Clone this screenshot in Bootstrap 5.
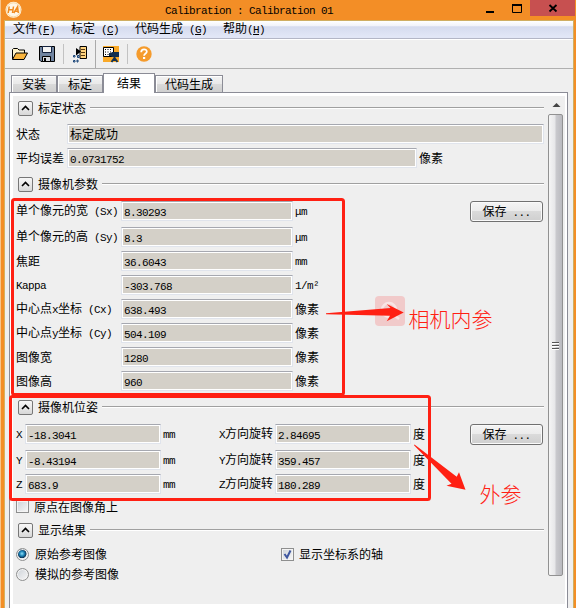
<!DOCTYPE html>
<html lang="zh-CN">
<head>
<meta charset="utf-8">
<meta name="viewport" content="width=device-width, initial-scale=1">
<title>Calibration : Calibration 01</title>
<link href="https://cdn.jsdelivr.net/npm/bootstrap@5.3.0/dist/css/bootstrap.min.css" rel="stylesheet">
<style>
body{width:576px;height:608px;margin:0;overflow:hidden;background:#f38e26;color:#000;font:12px/16px "Noto Sans CJK SC",sans-serif}
svg{display:block;flex:none}
i{font:11px/16px "Liberation Mono",monospace;letter-spacing:-.6px;white-space:pre}
.win{width:576px;height:608px;border-left:1px solid #f7c58c}
.titlebar{height:20px}
.titlebar .caption{padding-left:140px}
.winbtns{margin-right:1px}
.closebtn{width:45px;height:16px;background:#c75050}
.frame{margin:0 2px 0 3px;height:588px;background:#efefef;border:1px solid #cfae62;border-bottom:0;border-left-color:#d9b25c}
.menus{height:18px;padding:0 0 2px 8px;background:linear-gradient(#fff 0,#f1f3fa 28%,#d5dbee 34%,#e1e6f6 90%);border-bottom:1px solid #b3b6c6}
.menus span{white-space:nowrap}
.m1{width:58px}.m2{width:64px}.m3{width:88px}
.tools{height:30px;border-top:1px solid #fff;border-bottom:1px solid #b0b0b0}
.tabstrip{height:23px;padding:0 0 0 6px}
.tabitem{width:46px;height:17px;border:1px solid #8b8c96;border-bottom:0;background:linear-gradient(#f3f3f3,#e9e9e9 50%,#dadada 52%,#cfcfcf);line-height:16px;box-shadow:inset 1px 1px #fff;text-align:center;white-space:nowrap}
.tabitem.on{width:52px;height:20px;background:#fff;position:relative;z-index:1;margin-bottom:-1px;line-height:18px}
.tabitem.wide{width:68px}
.pane{margin-left:4px;width:559px;height:520px;background:#fff;border:1px solid #8b8c96;border-bottom:0;padding:3px 2px 0 3px}
.inner{height:508px;background:#efefef}
.content{width:535px;padding:0 1px 0 3px}
.ln{height:24px;display:flex;align-items:center;white-space:nowrap}
.sp1{margin-top:1px}.sp2{margin-top:2px}.sp3{margin-top:3px}
.opt{height:20px}.opt0{height:21px}
.opt .txt{margin-left:6px}
.opt .txt.first{width:246px}
.opt0 .txt,.opt .txt.near{margin-left:5px}
.rule{height:2px;border-top:1px solid #a0a0a0;background:#fff;flex:1;margin:0 3px 0 4px}
.fold{width:15px;height:15px;border:1px solid #777;border-radius:2px;background:linear-gradient(#f7f7f7,#e8e8e8 50%,#d7d7d7);margin:0 5px 0 2px}
.fld{height:20px;border:1px solid #e0e4ec;border-top-color:#a6a8b0;background:#d4d0c8;box-shadow:inset 0 0 0 1px #fff;padding:0 0 0 2px;line-height:17px;flex:none}
.fld i{line-height:17px}
.c0{width:51px}.w0{width:477px}.w01{width:350px}
.c1{width:105px}.w1{width:172px}
.c2{width:9px}.w2{width:136px}
.rot{width:56px}
.unit{margin-left:2px}
.unit.gap{width:56px}
.savebtn{width:73px;height:21px;border:1px solid #707070;border-radius:3px;background:linear-gradient(#f4f4f4,#ebebeb 48%,#dadada 50%,#cfcfcf);box-shadow:inset 0 0 0 1px #fafafa;font-size:12px;line-height:18px;padding:0;color:#000}
.bar{width:16px;height:480px}
.thumb{width:15px;height:462px;border:1px solid #919191;border-radius:2px;background:linear-gradient(90deg,#f5f5f5,#e7e7e9 45%,#c9c9cd 55%,#bababf)}
.notes{position:absolute;left:0;top:0;pointer-events:none}
.notes text{font:300 21px "Noto Sans CJK SC",sans-serif;fill:#ff2013}
.box,.dot{width:13px;height:13px;border:1px solid #8e8f8f;background:linear-gradient(135deg,#cdd2d8,#f8f8f8);box-shadow:inset 0 0 0 1px #f4f4f4;flex:none}
.dot{border-radius:50%}
.dot.sel{background:radial-gradient(circle at 45% 42%,#8fe0f8 0,#1980b4 28%,#103454 48%,#e8eef2 56%)}
</style>
<script src="https://cdn.jsdelivr.net/npm/bootstrap@5.3.0/dist/js/bootstrap.bundle.min.js"></script>
</head>
<body>
<div class="win">
 <header class="titlebar d-flex align-items-center">
  <svg width="20" height="20" viewBox="0 0 20 20" class="ms-1"><circle cx="8.5" cy="9.8" r="8" fill="#fff6e6"/><circle cx="8.5" cy="9.8" r="7" fill="none" stroke="#f9d9a5"/><path d="M4.2 6.5 3.2 13M8.5 6.5 7.5 13M4 9.7h4M8.800 13l3.800-6.200L13.300 13M10.200 11.200H13" fill="none" stroke="#f18b20" stroke-width="1.5"/></svg>
  <div class="caption"><i>Calibration : Calibration 01</i></div>
  <div class="winbtns d-flex align-self-start ms-auto">
   <svg width="44" height="16"><path d="M0 11h8v2H0z"/><path d="M26.500 5h9v7.500h-9z" fill="none" stroke="#000"/><path d="M26 5h10" stroke="#000" stroke-width="2"/></svg>
   <div class="closebtn"><svg width="45" height="16"><path d="m19.500 5 7 6.500m0-6.500-7 6.500" stroke="#000" stroke-width="1.800"/></svg></div>
  </div>
 </header>
 <div class="frame">
  <nav class="menus d-flex align-items-center">
   <span class="m1">文件<i>(<u>F</u>)</i></span><span class="m2">标定<i> (<u>C</u>)</i></span><span class="m3">代码生成<i> (<u>G</u>)</i></span><span>帮助<i>(<u>H</u>)</i></span>
  </nav>
  <div class="tools d-flex align-items-center">
   <svg width="162" height="28" viewBox="5 40 162 28">
    <path d="M12.500 59V49.500l1-1h4l1.500 1.500h5.500V53" fill="#fff3c9" stroke="#000"/><path d="M12.500 59.500 16 53h11.500L24 59.500z" fill="#f9b43d" stroke="#000"/>
    <path d="M39.500 46.500h15v15H41l-1.500-1.500z" fill="#7084a0" stroke="#000"/><path d="M42.500 46.500h9v6h-9z" fill="#f4f4f4" stroke="#152440"/><path d="M42.500 56.500h8v5h-8z" fill="#d8dbe0" stroke="#000"/><path d="M44 58h2v3h-2z"/>
    <path d="M63.500 44v20" stroke="#c2c2c2"/>
    <path d="M80 46.500h6.500v12H80z" fill="#ffd37e" stroke="#000"/><path d="M81 49.500h4m-4 3h4m-4 3h4" stroke="#5a3c14"/><path d="M76 48l5 3.500-5 4z"/><path d="M73.500 55.500h1.500v1.500h-1.500zm4 0h1.500v2h-1.500zm-4 5h1.500v1.500h-1.500zm3.500-.5h1v2h-1z" fill="none" stroke="#164277"/>
    <path d="M95.500 40v28" stroke="#aaa"/>
    <path d="M103 46h16v16h-16z" fill="#f9a928"/><path d="M103.500 47.500h10v9h-10z" fill="#fff" stroke="#000"/><path d="M105 49.500h7m-7 2.500h7m-7 2.500h7" stroke="#000" stroke-dasharray="1 1.500"/><path d="M109 53h2l1-1h7v5h-7l-1-1h-2z" fill="#12304f"/><path d="M114.500 56v2l-3 4m3-4 3 4m-3-4v3" stroke="#12304f" stroke-width="2" fill="none"/>
    <path d="M127.500 44v20" stroke="#c2c2c2"/>
    <circle cx="144" cy="54" r="7.700" fill="#f59b2c"/><path d="M141.200 52.200c0-4 5.800-3.600 5.600-.5-.1 1.900-2.700 1.700-2.700 4.100" fill="none" stroke="#fff" stroke-width="1.800"/><path d="M143 57h2.200v2H143z" fill="#fff"/>
   </svg>
  </div>
  <div class="tabstrip d-flex align-items-end">
   <div class="tabitem">安装</div><div class="tabitem">标定</div><div class="tabitem on">结果</div><div class="tabitem wide">代码生成</div>
  </div>
  <main class="pane">
   <div class="inner d-flex">
    <div class="content">
     <div class="ln"><span class="fold"><svg width="13" height="13"><path d="m3 8 3.500-3.500L10 8" fill="none" stroke="#000" stroke-width="1.600"/></svg></span>标定状态<span class="rule"></span></div>
     <div class="ln sp2"><span class="c0">状态</span><span class="fld w0">标定成功</span></div>
     <div class="ln"><span class="c0">平均误差</span><span class="fld w01"><i>0.0731752</i></span><span class="unit">像素</span></div>
     <div class="ln sp2"><span class="fold"><svg width="13" height="13"><path d="m3 8 3.500-3.500L10 8" fill="none" stroke="#000" stroke-width="1.600"/></svg></span>摄像机参数<span class="rule"></span></div>
     <div class="ln sp3"><span class="c1">单个像元的宽<i> (Sx)</i></span><span class="fld w1"><i>8.30293</i></span><span class="unit"><i>μm</i></span><button class="savebtn ms-auto me-1" type="button">保存<i> ...</i></button></div>
     <div class="ln sp2"><span class="c1">单个像元的高<i> (Sy)</i></span><span class="fld w1"><i>8.3</i></span><span class="unit"><i>μm</i></span></div>
     <div class="ln"><span class="c1">焦距</span><span class="fld w1"><i>36.6043</i></span><span class="unit"><i>mm</i></span></div>
     <div class="ln"><span class="c1"><i>Kappa</i></span><span class="fld w1"><i>-303.768</i></span><span class="unit"><i>1/m²</i></span></div>
     <div class="ln"><span class="c1">中心点<i>x</i>坐标<i> (Cx)</i></span><span class="fld w1"><i>638.493</i></span><span class="unit">像素</span></div>
     <div class="ln"><span class="c1">中心点<i>y</i>坐标<i> (Cy)</i></span><span class="fld w1"><i>504.109</i></span><span class="unit">像素</span></div>
     <div class="ln"><span class="c1">图像宽</span><span class="fld w1"><i>1280</i></span><span class="unit">像素</span></div>
     <div class="ln"><span class="c1">图像高</span><span class="fld w1"><i>960</i></span><span class="unit">像素</span></div>
     <div class="ln sp2"><span class="fold"><svg width="13" height="13"><path d="m3 8 3.500-3.500L10 8" fill="none" stroke="#000" stroke-width="1.600"/></svg></span>摄像机位姿<span class="rule"></span></div>
     <div class="ln sp3"><span class="c2"><i>X</i></span><span class="fld w2"><i>-18.3041</i></span><span class="unit gap"><i>mm</i></span><span class="rot"><i>X</i>方向旋转</span><span class="fld w2"><i>2.84695</i></span><span class="unit">度</span><button class="savebtn ms-auto me-1" type="button">保存<i> ...</i></button></div>
     <div class="ln sp2"><span class="c2"><i>Y</i></span><span class="fld w2"><i>-8.43194</i></span><span class="unit gap"><i>mm</i></span><span class="rot"><i>Y</i>方向旋转</span><span class="fld w2"><i>359.457</i></span><span class="unit">度</span></div>
     <div class="ln"><span class="c2"><i>Z</i></span><span class="fld w2"><i>683.9</i></span><span class="unit gap"><i>mm</i></span><span class="rot"><i>Z</i>方向旋转</span><span class="fld w2"><i>180.289</i></span><span class="unit">度</span></div>
     <div class="ln opt0"><span class="box"></span><span class="txt">原点在图像角上</span></div>
     <div class="ln sp1"><span class="fold"><svg width="13" height="13"><path d="m3 8 3.500-3.500L10 8" fill="none" stroke="#000" stroke-width="1.600"/></svg></span>显示结果<span class="rule"></span></div>
     <div class="ln opt sp2"><span class="dot sel"></span><span class="txt first">原始参考图像</span><span class="box"><svg width="11" height="11"><path d="m2.500 5 2.500 3.500L8.500 1.500" fill="none" stroke="#3f57a0" stroke-width="2"/></svg></span><span class="txt near">显示坐标系的轴</span></div>
     <div class="ln opt"><span class="dot"></span><span class="txt">模拟的参考图像</span></div>
    </div>
    <div class="bar">
     <svg width="16" height="18"><path d="m4.500 11 4-4 4 4z" fill="#444"/></svg>
     <div class="thumb d-flex align-items-center justify-content-center"><svg width="9" height="9"><path d="M1 1.500h7M1 4.500h7M1 7.500h7" stroke="#555"/><path d="M1 2.500h7M1 5.500h7M1 8.500h7" stroke="#fff"/></svg></div>
    </div>
   </div>
  </main>
 </div>
</div>
<svg class="notes" width="576" height="608">
 <rect x="375" y="296" width="30" height="30" rx="4" fill="#f1caca"/>
 <circle cx="389" cy="310" r="7" fill="none" stroke="#f8e6e6" stroke-width="2.500"/><path d="m394 315 5 4" stroke="#f8e6e6" stroke-width="2.500"/>
 <g fill="none" stroke="#ff2013" stroke-width="3"><rect x="12.500" y="199.500" width="331" height="195" rx="2"/><rect x="10.500" y="396.500" width="419" height="103" rx="2"/></g>
 <path d="M326 313.300 390.500 308l-3.800-4 17 8.500-17 8.800 3.300-5.600-64-1.400z" fill="#ff2013"/>
 <path d="m414 445.300.5-.8 42.200 32.200 2.300-4.500 6.500 17.500-19-4 5-2z" fill="#ff2013"/>
 <text x="408.500" y="327">相机内参</text><text x="479.500" y="502">外参</text>
</svg>
</body>
</html>
